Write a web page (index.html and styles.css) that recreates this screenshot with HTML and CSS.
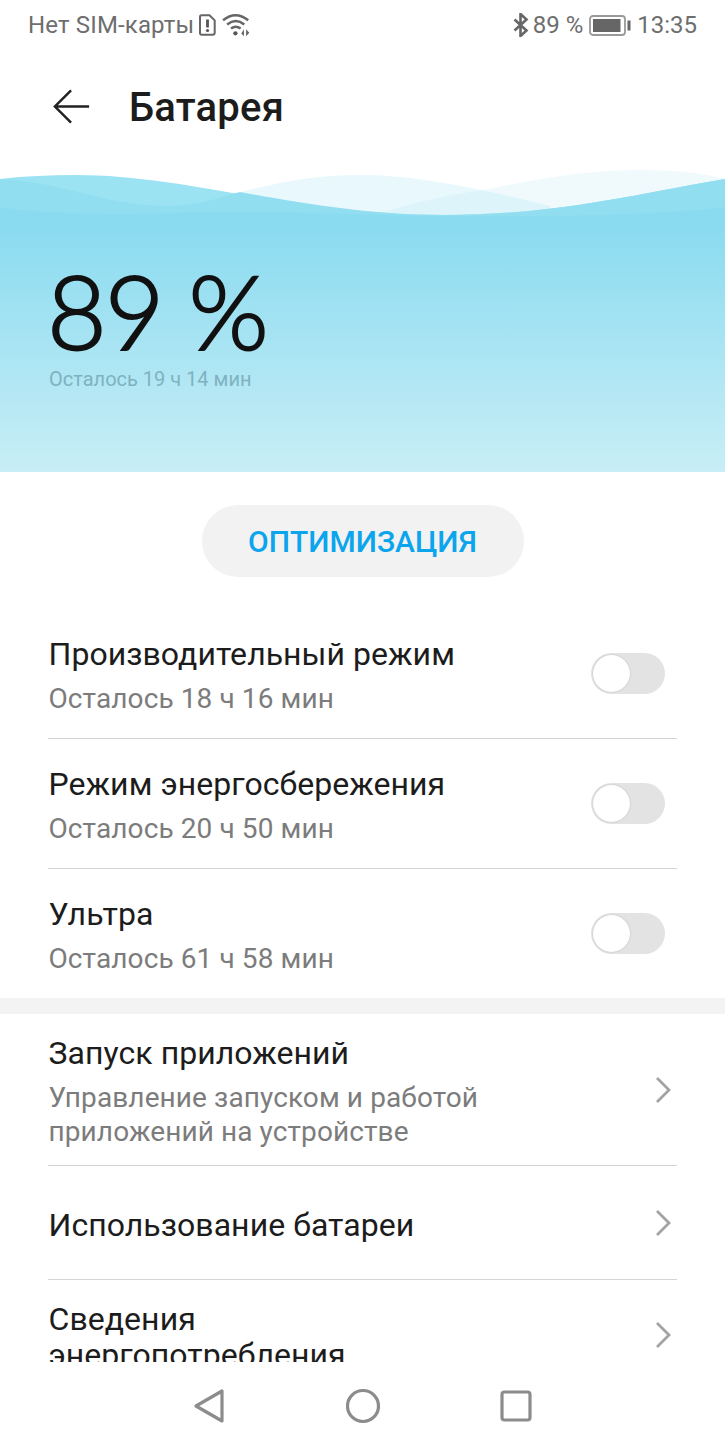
FILE: index.html
```html
<!DOCTYPE html>
<html lang="ru">
<head>
<meta charset="utf-8">
<title>Батарея</title>
<link rel="stylesheet" href="styles.css">
</head>
<body>
<div class="screen">
  <div class="status">
    <div class="status-group">
      <span class="carrier">Нет SIM-карты</span>
      <svg class="ic-sim" viewBox="0 0 17 22"><path d="M2.500 1.200h8l5.200 5.200v12.400q0 2-2 2h-11q-1.700 0-1.700-2V3q0-1.800 1.500-1.800z" fill="none" stroke="#666" stroke-width="2"/><path d="M8.500 5.500v8" stroke="#555" stroke-width="2.800"/><circle cx="8.500" cy="16.500" r="1.600" fill="#555"/></svg>
      <svg class="ic-wifi" viewBox="0 0 28 22"><g fill="none" stroke="#666" stroke-width="2.300"><path d="M1 6.500Q12.500-2.800 24.500 6.500"/><path d="M4.800 10.500q8-6.400 16 0"/><path d="M8.400 14.300q4.500-3.400 9 0"/></g><circle cx="12.500" cy="18.800" r="2" fill="#555"/><path d="M20.500 15v6.500l-2.500-2.500zM22.500 15v6.500l3-3.200z" fill="#666"/></svg>
    </div>
    <div class="status-group">
      <svg class="ic-bt" viewBox="0 0 16 24"><path d="M1.500 6.500l12 11-6 5.500V1l6 5.500-12 11" fill="none" stroke="#666" stroke-width="2.600"/></svg>
      <span>89 %</span>
      <svg class="ic-bat" viewBox="0 0 42 21"><rect x="1" y="1" width="35" height="19" rx="3" fill="none" stroke="#999" stroke-width="1.800"/><rect x="4" y="4" width="27.500" height="13" fill="#666"/><rect x="38.500" y="5.500" width="3" height="10" fill="#666"/></svg>
      <span class="time">13:35</span>
    </div>
  </div>
  <div class="header">
    <svg class="ic-back" viewBox="0 0 40 38"><path d="M38 19H2M19 2 2 19l17 17" fill="none" stroke="#222" stroke-width="2.600"/></svg>
    <h1 class="title">Батарея</h1>
  </div>
  <div class="hero">
    <svg class="waves" viewBox="0 0 725 65" preserveAspectRatio="none">
      <path class="wave-back-far" d="M380 48C420 36 450 30 483 25C540 13 590 5 640 5C675 5 705 8 725 14V65H380Z"/>
      <path class="wave-back-near" d="M230 30C280 16 320 10 361 10C410 10 470 21 550 41V65H230Z"/>
      <path class="wave-light" d="M0 14C25 11 50 10 75 10C190 10 290 50 443 50C560 50 640 28 725 14V65H0Z"/>
      <path class="wave-mid" d="M0 14C60 16 105 41 167 41C195 41 215 34 240 27C300 38 370 50 443 50C560 50 640 28 725 14V65H0Z"/>
      <path class="wave-low" d="M0 42C50 49 110 50 167 48C260 44 340 50 443 51C560 52 650 50 725 42V65H0Z"/>
    </svg>
    <div class="level">89 %</div>
    <div class="remain">Осталось 19 ч 14 мин</div>
  </div>
  <div class="content">
    <div class="action"><button class="opt">ОПТИМИЗАЦИЯ</button></div>
    <div class="group">
      <div class="row row-tall">
        <div class="texts"><div class="name">Производительный режим</div><div class="sub">Осталось 18 ч 16 мин</div></div>
        <span class="toggle"></span>
      </div>
      <div class="row row-tall">
        <div class="texts"><div class="name">Режим энергосбережения</div><div class="sub">Осталось 20 ч 50 мин</div></div>
        <span class="toggle"></span>
      </div>
      <div class="row row-tall row-last row-ultra">
        <div class="texts"><div class="name">Ультра</div><div class="sub">Осталось 61 ч 58 мин</div></div>
        <span class="toggle"></span>
      </div>
    </div>
    <div class="band"></div>
    <div class="group">
      <div class="row row-start">
        <div class="texts"><div class="name">Запуск приложений</div><div class="sub">Управление запуском и работой<br>приложений на устройстве</div></div>
        <svg class="chev" viewBox="0 0 16 28"><path d="M2 2l12 12L2 26" fill="none" stroke="#a3a3a3" stroke-width="2.800"/></svg>
      </div>
      <div class="row row-mid">
        <div class="texts"><div class="name">Использование батареи</div></div>
        <svg class="chev" viewBox="0 0 16 28"><path d="M2 2l12 12L2 26" fill="none" stroke="#a3a3a3" stroke-width="2.800"/></svg>
      </div>
      <div class="row row-info row-last">
        <div class="texts"><div class="name">Сведения<br>энергопотребления</div></div>
        <svg class="chev" viewBox="0 0 16 28"><path d="M2 2l12 12L2 26" fill="none" stroke="#a3a3a3" stroke-width="2.800"/></svg>
      </div>
    </div>
  </div>
  <div class="nav">
    <svg class="ic-nav" viewBox="0 0 34 36"><path d="M29 3v30L3 18z" fill="none" stroke="#8c8c8c" stroke-width="3.200" stroke-linejoin="round"/></svg>
    <svg class="ic-nav" viewBox="0 0 34 36"><circle cx="17" cy="18" r="15.500" fill="none" stroke="#8c8c8c" stroke-width="3.200"/></svg>
    <svg class="ic-nav" viewBox="0 0 34 36"><rect x="3" y="4" width="28" height="28" rx="2.500" fill="none" stroke="#8c8c8c" stroke-width="3.200"/></svg>
  </div>
</div>
</body>
</html>
```
FILE: styles.css
```css
* { box-sizing: border-box; }
html, body { margin: 0; padding: 0; background: #fff; }
body { font-family: Roboto, "Noto Sans", sans-serif; }
.screen { width: 725px; height: 1450px; display: flex; flex-direction: column; overflow: hidden; background: #fff; }
.status { height: 50px; flex: none; display: flex; justify-content: space-between; align-items: center; padding: 0 28px 0 28px; color: #6e6e6e; font-size: 24px; }
.status-group { display: flex; align-items: center; gap: 4px; }
.carrier { letter-spacing: .15px; margin-right: 1px; }
.ic-sim { width: 17px; height: 22px; }
.ic-wifi { width: 30px; height: 24px; margin-left: 2px; }
.ic-bt { width: 16px; height: 24px; }
.ic-bat { width: 42px; height: 21px; margin: 0 2px; }
.header { height: 115px; flex: none; display: flex; align-items: center; padding: 0 0 2px 53px; }
.ic-back { width: 38px; height: 37px; margin-right: 38px; }
.title { margin: 2px 0 0; font-size: 40px; font-weight: 500; letter-spacing: .2px; color: #1c1c1c; }
.hero { height: 307px; flex: none; position: relative; background: linear-gradient(#8bdbf0 21%, #c8eef6 100%); padding: 91px 0 0 47px; }
.waves { position: absolute; left: 0; top: 0; width: 725px; height: 65px; background: #fff; }
.wave-back-far { fill: #8cdcf0; fill-opacity: .13; }
.wave-back-near { fill: #8cdcf0; fill-opacity: .2; }
.wave-light { fill: #9be2f3; }
.wave-mid { fill: #92def1; }
.wave-low { fill: #8bdbf0; }
.level { position: relative; font-family: Lato, sans-serif; font-weight: 300; font-size: 103px; line-height: 108px; letter-spacing: -2px; color: #111; -webkit-text-stroke: 2px #111; }
.remain { position: relative; font-size: 20px; line-height: 24px; color: #7fb2c0; margin: 3px 0 0 2px; }
.content { height: 890px; flex: none; overflow: hidden; }
.action { display: flex; justify-content: center; padding-top: 33px; height: 137px; }
.opt { width: 322px; height: 72px; border: 0; border-radius: 36px; background: #f2f2f2; color: #0aa5ec; font: 500 30px Roboto, sans-serif; }
.group { padding: 0 48px; }
.row { display: flex; align-items: center; justify-content: space-between; padding: 20px 6px 16px .5px; border-bottom: 1px solid #d4d4d4; }
.row-tall { min-height: 130px; padding-right: 12px; }
.row-ultra { min-height: 129px; }
.row-start { min-height: 152px; }
.row-mid { min-height: 114px; }
.row-info { min-height: 110px; }
.row-last { border-bottom: 0; }
.name { font-size: 32px; line-height: 36px; letter-spacing: .05px; color: #1c1c1c; }
.sub { font-size: 28px; line-height: 34px; letter-spacing: .1px; color: #7c7c7c; margin-top: 10px; }
.toggle { width: 74px; height: 41px; border-radius: 21px; background: #e3e3e3; position: relative; margin-top: -5px; }
.toggle::after { content: ""; position: absolute; left: 2px; top: 2px; width: 37px; height: 37px; border-radius: 50%; background: #fff; box-shadow: 0 0 2px rgba(0,0,0,.2); }
.chev { width: 16px; height: 28px; margin-top: -4px; }
.band { height: 16px; background: #f3f3f3; }
.nav { flex: 1; display: flex; justify-content: center; gap: 119px; padding-top: 26px; background: #fff; }
.ic-nav { width: 34px; height: 36px; }
```
